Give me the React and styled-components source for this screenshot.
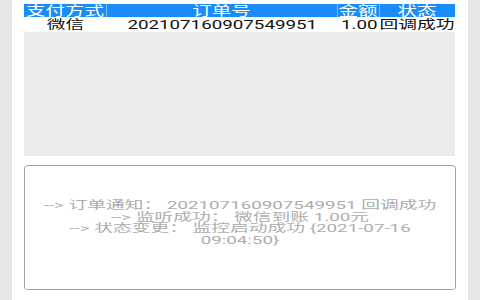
import React from 'react'
import styled, { createGlobalStyle } from 'styled-components'

const GlobalStyle = createGlobalStyle`
  html, body {
    margin: 0;
    padding: 0;
    background: #e6e6e6;
    font-family: Roboto, 'Noto Sans CJK SC', sans-serif;
  }
`

const Panel = styled.div`
  margin: 0 12px;
  height: 300px;
  box-sizing: border-box;
  padding: 4px 12px 0 12px;
  background: #ffffff;
`

const Table = styled.div`
  display: grid;
  grid-template-columns: 83px 231px 42px 75px;
  width: 431px;
`

const HeadCell = styled.div`
  height: 13px;
  line-height: 13px;
  background: #1a8cfa;
  color: #ffffff;
  font-size: 13px;
  text-align: center;
  border-right: 1px solid ${p => (p.$last ? '#1a8cfa' : '#7fbdfc')};
  box-sizing: border-box;
`

const Cell = styled.div`
  height: 13px;
  line-height: 13px;
  margin-top: 1px;
  color: #111111;
  font-size: 12.5px;
  text-align: center;
`

const Stretch = styled.span`
  display: inline-block;
  white-space: nowrap;
  transform: scaleX(${p => p.$x});
  transform-origin: center;
`

const EmptyArea = styled.div`
  margin-top: 1px;
  height: 124px;
  width: 431px;
  background: #ebebeb;
`

const LogBox = styled.div`
  margin-top: 9px;
  width: 432px;
  height: 125px;
  box-sizing: border-box;
  border: 1px solid #a0a0a0;
  border-radius: 5px / 3px;
  background: #ffffff;
  display: flex;
  justify-content: center;
  padding-top: 34px;
`

const LogText = styled.div`
  width: 264px;
  flex: none;
  font-size: 11.5px;
  line-height: 11.5px;
  color: #adadad;
  text-align: center;
  transform: scaleX(1.63);
  transform-origin: center top;
`

const heads = ['支付方式', '订单号', '金额', '状态']
const row = ['微信', '202107160907549951', '1.00', '回调成功']

export default function App() {
  return (
    <>
      <GlobalStyle />
      <Panel>
        <Table>
          {heads.map((h, i) => (
            <HeadCell key={h} $last={i === heads.length - 1}>
              <Stretch $x={1.5}>{h}</Stretch>
            </HeadCell>
          ))}
          {row.map(c => (
            <Cell key={c}>
              <Stretch $x={1.5}>{c}</Stretch>
            </Cell>
          ))}
        </Table>
        <EmptyArea />
        <LogBox>
          <LogText>
            --&gt; 订单通知： 202107160907549951 回调成功<br />
            --&gt; 监听成功： 微信到账 1.00元<br />
            --&gt; 状态变更： 监控启动成功 {'{'}2021-07-16<br />
            09:04:50{'}'}
          </LogText>
        </LogBox>
      </Panel>
    </>
  )
}
